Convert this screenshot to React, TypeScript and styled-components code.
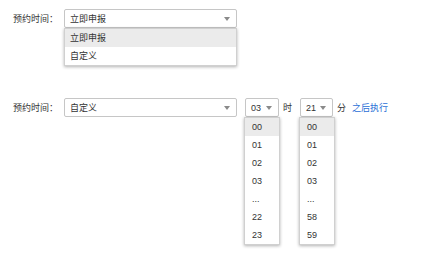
import React from "react";
import styled, { createGlobalStyle } from "styled-components";

const GlobalStyle = createGlobalStyle`
  body {
    margin: 0;
    background: #ffffff;
    font-family: "Liberation Sans", "Noto Sans CJK SC", sans-serif;
    color: #333333;
  }
`;

const Page = styled.div`
  width: 438px;
  height: 264px;
  display: flex;
  flex-direction: column;
  gap: 70px;
  padding: 9px 0 0 13px;
  box-sizing: border-box;
`;

const Row = styled.div`
  display: flex;
  align-items: center;
  height: 19px;
`;

const Label = styled.span`
  width: 51px;
  font-size: 9px;
  color: #333;
`;

const SelectWrap = styled.div<{ w: number; ml?: number }>`
  position: relative;
  width: ${(p) => p.w}px;
  margin-left: ${(p) => p.ml ?? 0}px;
`;

const SelectBox = styled.div`
  height: 19px;
  box-sizing: border-box;
  border: 1px solid #c6c6c6;
  border-radius: 2px;
  background: #fff;
  display: flex;
  align-items: center;
  justify-content: space-between;
  padding: 0 6px 0 5px;
  font-size: 9px;
  color: #333;
`;

const Arrow = styled.span`
  width: 0;
  height: 0;
  border-left: 3px solid transparent;
  border-right: 3px solid transparent;
  border-top: 4px solid #8a8a8a;
`;

const Menu = styled.ul<{ w?: number; dx?: number }>`
  position: absolute;
  top: 19px;
  left: ${(p) => p.dx ?? 0}px;
  width: ${(p) => (p.w ? `${p.w}px` : "100%")};
  margin: 0;
  padding: 0;
  list-style: none;
  background: #fff;
  border: 1px solid #d0d0d0;
  box-sizing: border-box;
  box-shadow: 0 1px 3px rgba(0, 0, 0, 0.3);
  z-index: 2;
`;

const Item = styled.li<{ active?: boolean; pl?: number }>`
  height: 18px;
  line-height: 18px;
  padding-left: ${(p) => p.pl ?? 5}px;
  font-size: 9px;
  color: #333;
  background: ${(p) => (p.active ? "#ebebeb" : "#fff")};
`;

const Unit = styled.span<{ ml: number }>`
  margin-left: ${(p) => p.ml}px;
  font-size: 9px;
  color: #333;
`;

const Link = styled.span`
  margin-left: 6px;
  font-size: 9px;
  color: #2b6fd6;
`;

const hours = ["00", "01", "02", "03", "...", "22", "23"];
const minutes = ["00", "01", "02", "03", "...", "58", "59"];

function App() {
  return (
    <>
      <GlobalStyle />
      <Page>
        <Row>
          <Label>预约时间：</Label>
          <SelectWrap w={173}>
            <SelectBox>
              <span>立即申报</span>
              <Arrow />
            </SelectBox>
            <Menu>
              <Item active>立即申报</Item>
              <Item>自定义</Item>
            </Menu>
          </SelectWrap>
        </Row>
        <Row>
          <Label>预约时间：</Label>
          <SelectWrap w={173}>
            <SelectBox>
              <span>自定义</span>
              <Arrow />
            </SelectBox>
          </SelectWrap>
          <SelectWrap w={34} ml={8}>
            <SelectBox>
              <span>03</span>
              <Arrow />
            </SelectBox>
            <Menu w={36} dx={-1}>
              {hours.map((h, i) => (
                <Item key={h} active={i === 0} pl={7}>
                  {h}
                </Item>
              ))}
            </Menu>
          </SelectWrap>
          <Unit ml={4}>时</Unit>
          <SelectWrap w={33} ml={8}>
            <SelectBox>
              <span>21</span>
              <Arrow />
            </SelectBox>
            <Menu w={36} dx={-1}>
              {minutes.map((m, i) => (
                <Item key={m} active={i === 0} pl={7}>
                  {m}
                </Item>
              ))}
            </Menu>
          </SelectWrap>
          <Unit ml={4}>分</Unit>
          <Link>之后执行</Link>
        </Row>
      </Page>
    </>
  );
}

export default App;
